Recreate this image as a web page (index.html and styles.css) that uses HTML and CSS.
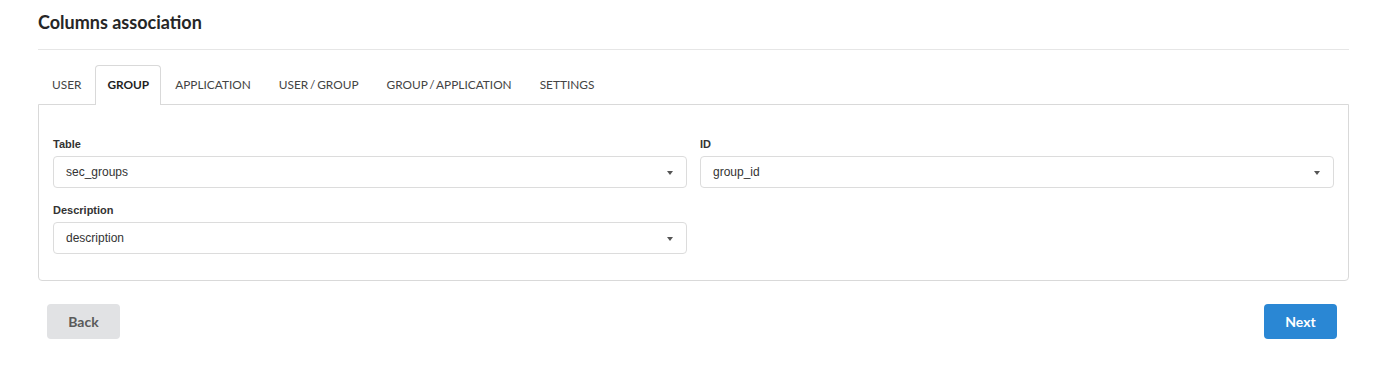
FILE: index.html
```html
<!DOCTYPE html>
<html lang="en">
<head>
    <meta charset="UTF-8">
    <title>Columns association</title>
    <link rel="stylesheet" href="styles.css">
</head>
<body>
    <div class="page">
        <h1 class="title">Columns association</h1>
        <hr class="divider">

        <ul class="tabs">
            <li class="tab">USER</li>
            <li class="tab active">GROUP</li>
            <li class="tab">APPLICATION</li>
            <li class="tab">USER / GROUP</li>
            <li class="tab">GROUP / APPLICATION</li>
            <li class="tab">SETTINGS</li>
        </ul>

        <div class="panel">
            <div class="form-grid">
                <div class="field">
                    <label class="field-label">Table</label>
                    <div class="select">sec_groups<span class="caret"></span></div>
                </div>
                <div class="field">
                    <label class="field-label">ID</label>
                    <div class="select">group_id<span class="caret"></span></div>
                </div>
                <div class="field">
                    <label class="field-label">Description</label>
                    <div class="select">description<span class="caret"></span></div>
                </div>
            </div>
        </div>

        <div class="actions">
            <button class="btn btn-back">Back</button>
            <button class="btn btn-next">Next</button>
        </div>
    </div>
</body>
</html>
```

FILE: styles.css
```css
body {
    margin: 0;
    background: #fff;
    font-family: 'Lato', sans-serif;
}

.page {
    padding: 0 38px;
}

.title {
    margin: 0;
    padding-top: 11px;
    font-size: 18px;
    font-weight: 700;
    line-height: 22px;
    color: #262626;
}

.divider {
    margin: 16px 0 0 0;
    border: none;
    border-top: 1px solid #e6e6e6;
}

.tabs {
    display: flex;
    list-style: none;
    margin: 15px 0 0 0;
    padding: 0;
    position: relative;
    z-index: 1;
}

.tab {
    padding: 0 13px;
    height: 38px;
    line-height: 38px;
    font-size: 11.85px;
    word-spacing: -1.2px;
    color: #444;
    border: 1px solid transparent;
    border-bottom: none;
    border-radius: 4px 4px 0 0;
}

.tab.active {
    height: 39px;
    padding: 0 11px;
    color: #1f1f1f;
    font-weight: 700;
    border-color: #d9d9d9;
    background: #fff;
}

.panel {
    margin-top: -1px;
    border: 1px solid #d9d9d9;
    border-radius: 0 0 4px 4px;
    padding: 31px 14px 26px 14px;
}

.form-grid {
    display: grid;
    grid-template-columns: 1fr 1fr;
    column-gap: 13px;
    row-gap: 14px;
}

.field-label {
    display: block;
    font-family: 'Liberation Sans', Arial, sans-serif;
    font-size: 11px;
    font-weight: 700;
    line-height: 16px;
    color: #333;
    margin-bottom: 4px;
}

.select {
    position: relative;
    height: 30px;
    line-height: 30px;
    padding: 0 12px;
    border: 1px solid #dcdcdc;
    border-radius: 4px;
    font-family: 'Liberation Sans', Arial, sans-serif;
    font-size: 12px;
    color: #333;
}

.caret {
    position: absolute;
    right: 13px;
    top: 14px;
    width: 0;
    height: 0;
    border-left: 3.5px solid transparent;
    border-right: 3.5px solid transparent;
    border-top: 4px solid #555;
}

.actions {
    display: flex;
    justify-content: space-between;
    margin-top: 23px;
    padding: 0 12px 0 9px;
}

.btn {
    width: 73px;
    height: 35px;
    border: none;
    border-radius: 4px;
    font-family: 'Lato', sans-serif;
    font-size: 14px;
    font-weight: 700;
    cursor: pointer;
}

.btn-back {
    background: #e1e2e4;
    color: #5a5a5a;
}

.btn-next {
    background: #2a87d4;
    color: #fff;
}
```
